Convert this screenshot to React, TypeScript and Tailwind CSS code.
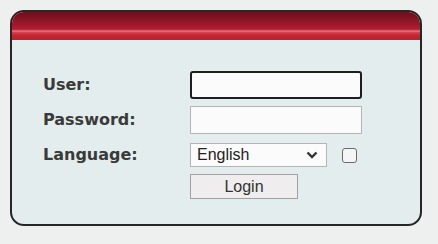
import React from "react";

function Chevron() {
  return (
    <svg width="12" height="8" viewBox="0 0 12 8" className="block">
      <path d="M1.5 1.5 L6 6 L10.5 1.5" fill="none" stroke="#333" strokeWidth="2.4" />
    </svg>
  );
}

export default function App() {
  const label = "font-['DejaVu_Sans',Verdana,sans-serif] font-bold text-[16px] text-[#3a3a3a]";
  return (
    <div className="w-[438px] h-[244px] bg-[#eef0ef] pt-[10px] pl-[10px] font-['Liberation_Sans',Arial,sans-serif]">
      <div className="w-[412px] h-[216px] border-2 border-[#262626] rounded-[14px] overflow-hidden bg-[#e4eded]">
        <div className="h-[28px] bg-[linear-gradient(to_bottom,#6a0f1f_0%,#9c1a2c_45%,#b41f30_62%,#e87a86_68%,#d23a46_74%,#c42432_85%,#c02230_100%)]" />
        <div className="pt-[31px] pl-[31px] grid grid-cols-[147px_auto] gap-y-[7px] items-center">
          <div className={label}>User:</div>
          <div className="w-[172px] h-[28px] border-2 border-[#1e1e1e] rounded-[3px] bg-[#fbfbfb]" />

          <div className={label}>Password:</div>
          <div className="w-[172px] h-[28px] border border-[#b4b4b4] bg-[#fbfbfb]" />

          <div className={`${label} mt-[2px]`}>Language:</div>
          <div className="flex items-center mt-[2px]">
            <div className="w-[137px] h-[24px] border border-[#b4b4b4] bg-[#fbfbfb] flex items-center justify-between pl-[6px] pr-[8px]">
              <span className="text-[16px] leading-none text-[#222]">English</span>
              <Chevron />
            </div>
            <div className="ml-[15px] w-[15px] h-[15px] border border-[#6a6a6a] rounded-[3px] bg-[#f4f6f6]" />
          </div>

          <div />
          <div className="w-[108px] h-[25px] border border-[#a0a0a0] bg-[#efeded] flex items-center justify-center text-[16px] leading-none text-[#333]">
            Login
          </div>
        </div>
      </div>
    </div>
  );
}
